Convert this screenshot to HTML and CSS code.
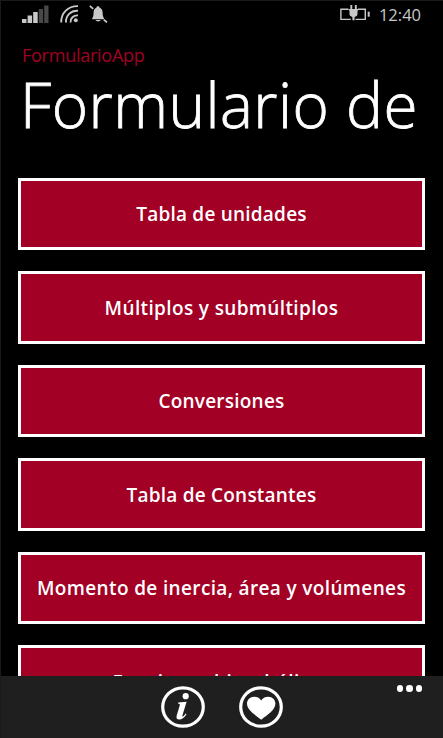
FILE: index.html
```html
<!DOCTYPE html>
<html lang="es">
<head>
    <meta charset="UTF-8">
    <meta name="viewport" content="width=device-width, initial-scale=1.0">
    <title>FormularioApp</title>
    <link rel="stylesheet" href="styles.css">
</head>
<body>
    <div class="status-bar">
        <svg class="signal" width="28" height="18" viewBox="0 0 28 18" fill="#c8c8c8">
            <rect x="0" y="14" width="4.5" height="4"/>
            <rect x="5.6" y="10.5" width="4.5" height="7.5"/>
            <rect x="11.2" y="7" width="4.5" height="11"/>
            <rect x="16.8" y="4" width="4.3" height="14" fill="#484848"/>
            <rect x="22.2" y="0.5" width="4.3" height="17.5" fill="#484848"/>
        </svg>
        <svg class="wifi" width="19" height="18" viewBox="0 0 19 18" fill="none" stroke="#c8c8c8" stroke-width="1.9">
            <circle cx="15.8" cy="15.3" r="2" fill="#c8c8c8" stroke="none"/>
            <path d="M10.6 17.5C10 13.5 13.5 10 18 10.4"/>
            <path d="M6 17.5C5.4 10.5 11 5.3 18 5.8"/>
            <path d="M1.2 17.5C1 8 8 0.8 18 1.1"/>
        </svg>
        <svg class="bell" width="19" height="18" viewBox="0 0 19 18" fill="#c8c8c8">
            <path d="M9 1.3C10.1 1.3 10.6 1.9 10.6 2.7C12.8 3.3 13.5 5 13.6 7.4C13.7 10.3 14.1 11.6 15 13.3V14.2H3.2V13.3C4.2 11.6 4.5 10.3 4.6 7.4C4.7 5 5.3 3.3 7.4 2.7C7.4 1.9 7.9 1.3 9 1.3Z"/>
            <path d="M6.5 15H11.7C11 16.9 7.2 16.9 6.5 15Z"/>
            <path d="M0.8 0.8L4.2 3.8M14.8 14.6L18 17.4" stroke="#c8c8c8" stroke-width="1.8"/>
        </svg>
        <svg class="battery" width="31" height="16" viewBox="0 0 31 16" fill="none" stroke="#c8c8c8" stroke-width="1.4">
            <path d="M8.5 4.2H0.9V14.4H10.8M17.8 4.2H25.3V14.4H15.6"/>
            <path d="M28.7 6.7V11.7" stroke-width="2"/>
            <path d="M11.3 0V5M15.8 0V5" stroke-width="1.9"/>
            <path d="M8.8 4H18.2V5.5H17.5V9C17.5 11 16 11.6 14.6 11.9V15.2H12.4V11.9C11 11.6 9.5 11 9.5 9V5.5H8.8Z" fill="#c8c8c8" stroke="none"/>
        </svg>
        <span class="clock">12:40</span>
    </div>

    <div class="header">
        <div class="app-name">FormularioApp</div>
        <h1>Formulario de</h1>
    </div>

    <div class="menu">
        <button class="menu-item">Tabla de unidades</button>
        <button class="menu-item wide">Múltiplos y submúltiplos</button>
        <button class="menu-item">Conversiones</button>
        <button class="menu-item">Tabla de Constantes</button>
        <button class="menu-item wide">Momento de inercia, área y volúmenes</button>
        <button class="menu-item wide">Funciones hiperbólicas</button>
    </div>

    <div class="app-bar">
        <button class="icon-btn">
            <svg width="44" height="42" viewBox="0 0 44 42">
                <ellipse cx="22" cy="21" rx="20.3" ry="19.2" fill="none" stroke="#fff" stroke-width="3.2"/>
                <circle cx="24.7" cy="10.2" r="3.1" fill="#fff"/>
                <path d="M17.2 16.6L25.6 15.7L21.4 29.5C21 31 22 31 23.3 29.3L24.7 27.6L25.5 28.2C23 32.2 20.8 33.4 18.2 33.4C15.8 33.4 15 31.8 15.7 29.4L18.7 19.4C19.1 18 18.6 17.7 17 17.6Z" fill="#fff"/>
            </svg>
        </button>
        <button class="icon-btn">
            <svg width="44" height="42" viewBox="0 0 44 42">
                <ellipse cx="22" cy="21" rx="20.3" ry="19.2" fill="none" stroke="#fff" stroke-width="3.2"/>
                <path d="M22.2 14.5C24 11.5 26.5 10.7 29.2 10.7C33.5 10.7 36.4 13.7 36.4 17.5C36.4 24 28.5 28.7 22.2 33.7C15.8 28.7 8 24 8 17.5C8 13.7 11 10.7 15.2 10.7C18 10.7 20.5 11.5 22.2 14.5Z" fill="#fff"/>
            </svg>
        </button>
        <div class="more">
            <span></span>
            <span></span>
            <span></span>
        </div>
    </div>
</body>
</html>
```
FILE: styles.css
```css
* {
    box-sizing: border-box;
}
body {
    margin: 0;
    height: 738px;
    display: flex;
    flex-direction: column;
    overflow: hidden;
    background-color: #000;
    border-top: 1px solid #1a1a1a;
    border-left: 1px solid #1a1a1a;
    font-family: "Open Sans", "Noto Sans", sans-serif;
    color: #fff;
}
svg {
    display: block;
    flex: none;
}
.status-bar {
    display: flex;
    align-items: flex-start;
    height: 41px;
    padding: 4px 22px 0 21px;
}
.wifi {
    margin-left: 10px;
}
.bell {
    margin-left: 10px;
}
.battery {
    margin-left: auto;
}
.clock {
    margin-left: 8px;
    font-size: 16.5px;
    line-height: 20px;
    color: #c8c8c8;
}
.header {
    height: 135.5px;
    padding-left: 21px;
    white-space: nowrap;
}
.app-name {
    height: 26px;
    font-size: 18px;
    line-height: 26px;
    letter-spacing: -0.25px;
    color: #a20025;
}
h1 {
    margin: 0 0 0 -2px;
    font-size: 62px;
    font-weight: 300;
    line-height: 72px;
    letter-spacing: 0.5px;
    -webkit-text-stroke: 0.8px #fff;
}
.menu {
    flex: 1;
    min-height: 0;
    overflow: hidden;
    display: flex;
    flex-direction: column;
    gap: 21px;
    padding: 0 18px 0 17px;
}
.menu-item {
    flex: none;
    height: 72.5px;
    padding: 1px 0 0;
    border: 3px solid #fff;
    background-color: #a20025;
    color: #fff;
    font-family: inherit;
    font-size: 19px;
    font-weight: 600;
    letter-spacing: 0.22px;
    white-space: nowrap;
}
.menu-item.wide {
    letter-spacing: 0.36px;
}
.app-bar {
    position: relative;
    flex: none;
    display: flex;
    justify-content: center;
    gap: 34px;
    height: 62px;
    padding-top: 10px;
    background-color: #1f1f1f;
}
.icon-btn {
    height: 42px;
    padding: 0;
    border: none;
    background: none;
}
.more {
    position: absolute;
    top: 9px;
    right: 21px;
    display: flex;
    gap: 3px;
}
.more span {
    width: 6.5px;
    height: 6.5px;
    border-radius: 50%;
    background-color: #fff;
}
```
